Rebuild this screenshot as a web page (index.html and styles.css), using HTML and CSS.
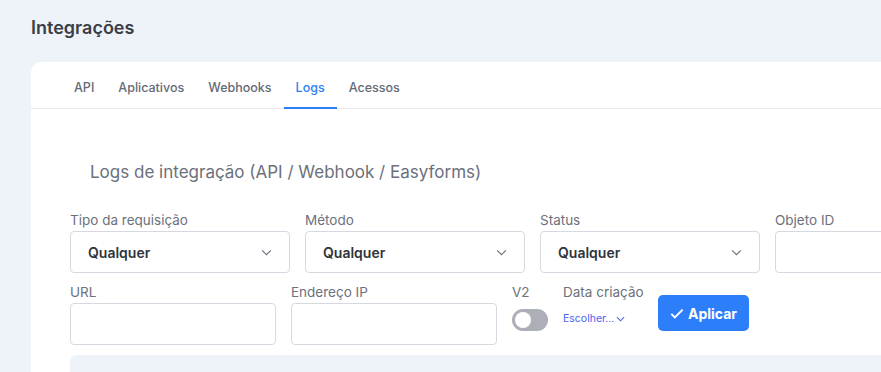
FILE: index.html
```html
<!DOCTYPE html>
<html lang="pt-BR">
<head>
  <meta charset="UTF-8">
  <title>Integrações</title>
  <link rel="stylesheet" href="styles.css">
</head>
<body>
<div class="page">
  <h1 class="page-title">Integrações</h1>

  <div class="card">
    <nav class="tabs">
      <a class="tab">API</a>
      <a class="tab">Aplicativos</a>
      <a class="tab">Webhooks</a>
      <a class="tab active">Logs</a>
      <a class="tab">Acessos</a>
    </nav>

    <div class="card-body">
      <h2 class="section-title">Logs de integração (API / Webhook / Easyforms)</h2>

      <div class="filter-row">
        <div class="field w-select">
          <label>Tipo da requisição</label>
          <div class="select">Qualquer
            <svg viewBox="0 0 12 8" width="11" height="7"><path d="M1 1.5l5 5 5-5" fill="none" stroke="#6c717c" stroke-width="1.3"/></svg>
          </div>
        </div>
        <div class="field w-select">
          <label>Método</label>
          <div class="select">Qualquer
            <svg viewBox="0 0 12 8" width="11" height="7"><path d="M1 1.5l5 5 5-5" fill="none" stroke="#6c717c" stroke-width="1.3"/></svg>
          </div>
        </div>
        <div class="field w-select">
          <label>Status</label>
          <div class="select">Qualquer
            <svg viewBox="0 0 12 8" width="11" height="7"><path d="M1 1.5l5 5 5-5" fill="none" stroke="#6c717c" stroke-width="1.3"/></svg>
          </div>
        </div>
        <div class="field w-select">
          <label>Objeto ID</label>
          <div class="input"></div>
        </div>
      </div>

      <div class="filter-row row-two">
        <div class="field w-input">
          <label>URL</label>
          <div class="input"></div>
        </div>
        <div class="field w-input">
          <label>Endereço IP</label>
          <div class="input"></div>
        </div>
        <div class="field w-toggle">
          <label>V2</label>
          <div class="toggle"><span class="knob"></span></div>
        </div>
        <div class="field w-date">
          <label>Data criação</label>
          <a class="date-link">Escolher...
            <svg viewBox="0 0 10 6" width="9" height="6"><path d="M1 1l4 4 4-4" fill="none" stroke="#4d63f0" stroke-width="1.2"/></svg>
          </a>
        </div>
        <button class="btn-apply" type="button">
          <svg viewBox="0 0 16 12" width="14" height="11"><path d="M1.5 6.5l4 4 9-9" fill="none" stroke="#fff" stroke-width="2.2"/></svg>
          Aplicar
        </button>
      </div>

      <div class="results"></div>
    </div>
  </div>
</div>
</body>
</html>
```

FILE: styles.css
```css
* {
  margin: 0;
  padding: 0;
  box-sizing: border-box;
}

body {
  background-color: #eef2f9;
  font-family: Inter, 'Noto Sans', sans-serif;
  overflow: hidden;
}

.page {
  padding: 17px 0 0 31px;
}

.page-title {
  font-size: 18px;
  font-weight: 600;
  line-height: 22px;
  color: #3a3e46;
  margin-bottom: 23px;
}

.card {
  background-color: #fff;
  border-radius: 10px 0 0 0;
  min-height: 400px;
}

.tabs {
  display: flex;
  padding-left: 31px;
  border-bottom: 1px solid #e8ebf0;
  height: 47px;
}

.tab {
  display: flex;
  align-items: center;
  padding: 5px 12px 0;
  font-size: 12.5px;
  font-weight: 500;
  color: #646a76;
  border-bottom: 2px solid transparent;
  margin-bottom: -1px;
}

.tab.active {
  color: #2d7ff9;
  border-bottom-color: #2d7ff9;
}

.card-body {
  padding: 51px 0 0 39px;
}

.section-title {
  font-size: 17px;
  font-weight: 400;
  line-height: 24px;
  color: #6b707b;
  padding-left: 20px;
  margin-bottom: 27px;
}

.filter-row {
  display: flex;
  gap: 15px;
}

.row-two {
  margin-top: 10px;
}

.field label {
  display: block;
  font-size: 13.5px;
  line-height: 18px;
  color: #6c717c;
  margin-bottom: 2px;
  white-space: nowrap;
}

.w-select {
  width: 220px;
  flex-shrink: 0;
}

.w-input {
  width: 206px;
  flex-shrink: 0;
}

.w-toggle {
  width: 36px;
  flex-shrink: 0;
}

.w-date {
  width: 80px;
  flex-shrink: 0;
}

.select,
.input {
  height: 42px;
  border: 1px solid #d6d9e0;
  border-radius: 4px;
  background-color: #fff;
}

.select {
  display: flex;
  align-items: center;
  justify-content: space-between;
  padding: 0 17px 0 17px;
  font-size: 14px;
  font-weight: 600;
  color: #30343b;
}

.toggle {
  width: 36px;
  height: 22px;
  border-radius: 11px;
  background-color: #acafb8;
  margin-top: 8px;
  padding: 3px;
}

.knob {
  display: block;
  width: 16px;
  height: 16px;
  border-radius: 50%;
  background-color: #fff;
}

.date-link {
  display: flex;
  align-items: center;
  gap: 2px;
  font-size: 10.5px;
  line-height: 13px;
  color: #4d63f0;
  margin-top: 11px;
}

.btn-apply {
  display: flex;
  align-items: center;
  justify-content: center;
  gap: 4px;
  width: 91px;
  height: 36px;
  margin-top: 12px;
  border: none;
  border-radius: 5px;
  background-color: #2d7ff9;
  color: #fff;
  font-family: Inter, 'Noto Sans', sans-serif;
  font-size: 14px;
  font-weight: 700;
}

.results {
  margin-top: 10px;
  height: 60px;
  background-color: #eef2f9;
  border-radius: 6px 0 0 0;
}
```
